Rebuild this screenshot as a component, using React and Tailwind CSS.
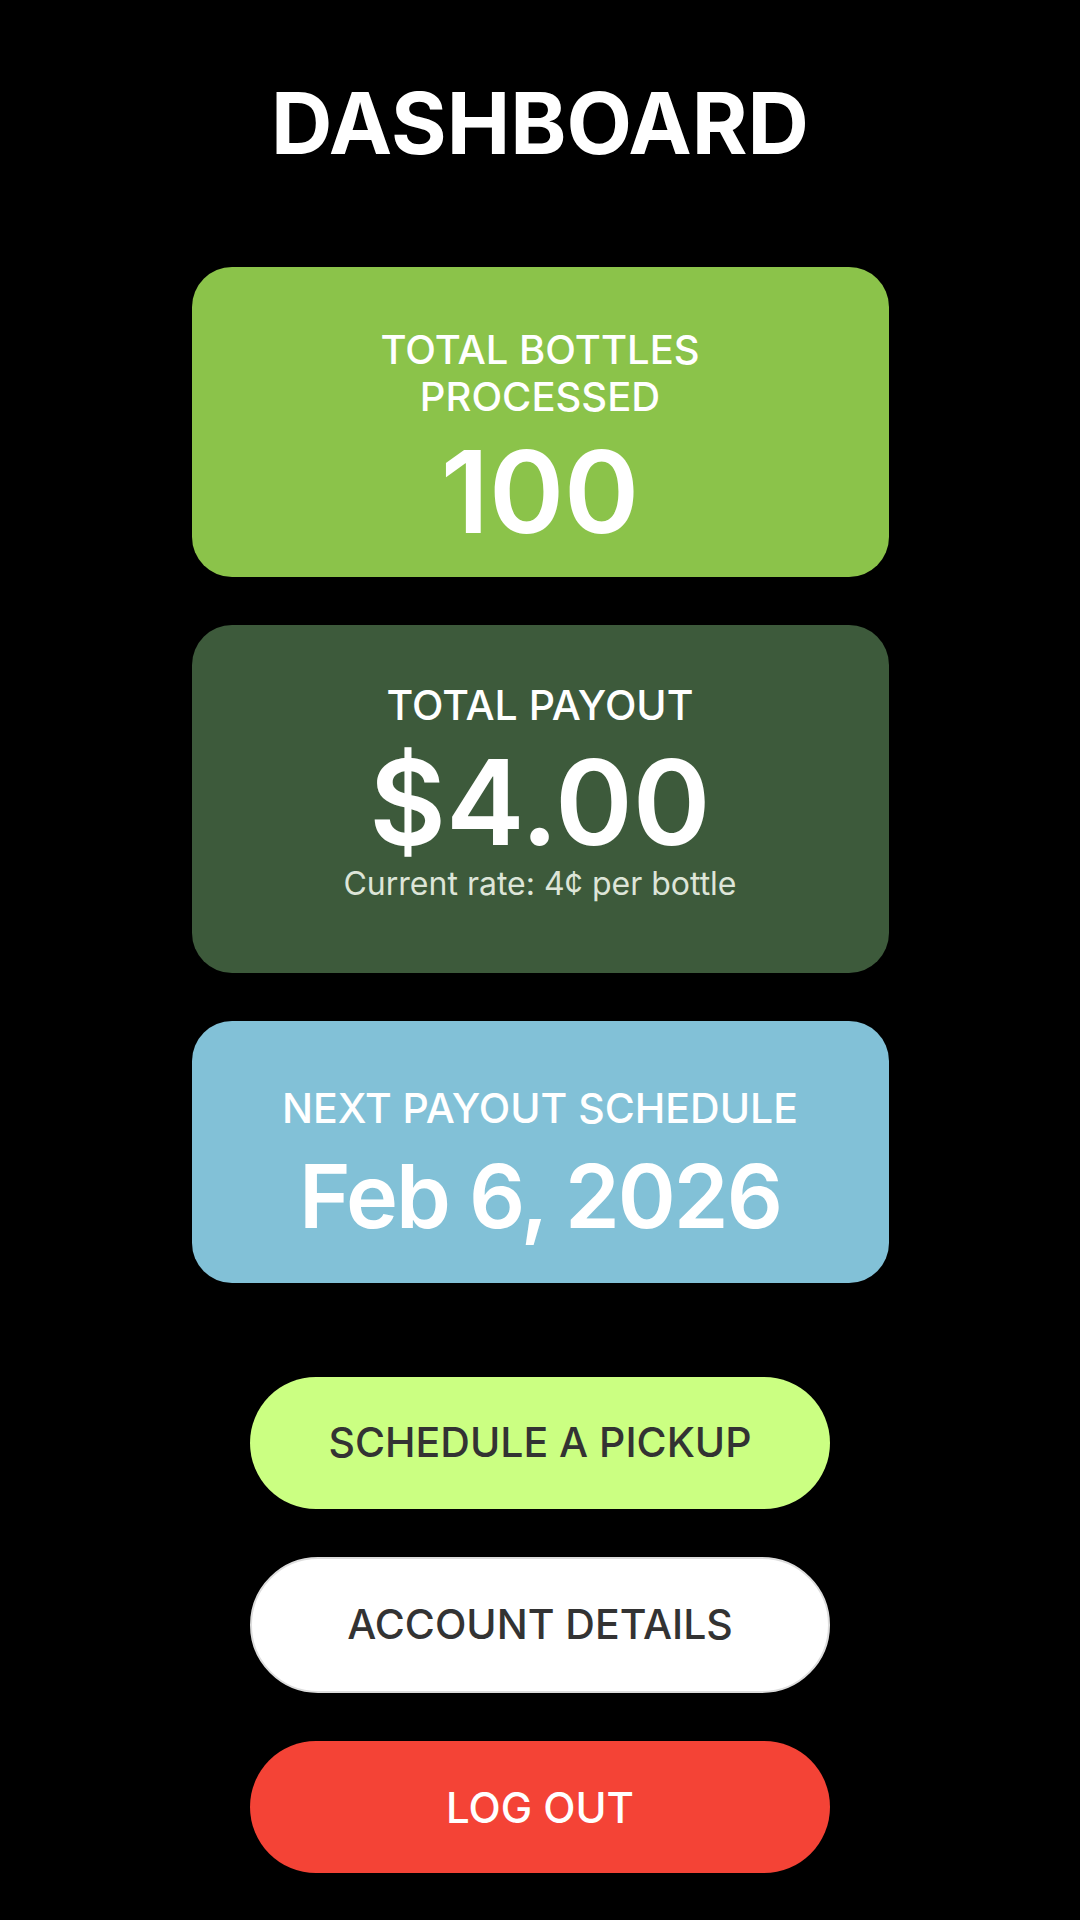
export default function App() {
  const font = { fontFamily: 'Inter, "Noto Sans", sans-serif' };
  return (
    <div className="min-h-[1920px] w-[1080px] bg-black flex flex-col items-center" style={font}>
      <h1 className="mt-[80px] text-[85px] leading-[88px] font-bold text-white">DASHBOARD</h1>

      <div className="mt-[99px] w-[697px] flex flex-col gap-[48px]">
        <div className="h-[310px] rounded-[40px] bg-[#8bc34a] flex flex-col items-center justify-center text-white pt-[30px]">
          <div className="text-[40px] leading-[47px] font-medium text-center">TOTAL BOTTLES<br />PROCESSED</div>
          <div className="text-[114px] leading-[112px] font-semibold mt-[16px]">100</div>
        </div>

        <div className="h-[348px] rounded-[40px] bg-[#3d5a3b] flex flex-col items-center justify-center text-white pb-[14px]">
          <div className="text-[41px] leading-[48px] font-medium mb-[20px]">TOTAL PAYOUT</div>
          <div className="text-[118px] leading-[106px] font-semibold">$4.00</div>
          <div className="text-[32px] leading-[38px] text-[#dde5d8] mt-[10px]">Current rate: 4¢ per bottle</div>
        </div>

        <div className="h-[262px] rounded-[40px] bg-[#82c1d7] flex flex-col items-center justify-center text-white pt-[27px]">
          <div className="text-[41px] leading-[46px] font-medium">NEXT PAYOUT SCHEDULE</div>
          <div className="text-[88px] leading-[100px] font-semibold tracking-[-2px] mt-[15px]">Feb 6, 2026</div>
        </div>
      </div>

      <div className="mt-[94px] w-[580px] flex flex-col gap-[48px]">
        <button className="h-[132px] rounded-full bg-[#cbff82] text-[#333333] text-[41px] font-medium">SCHEDULE A PICKUP</button>
        <button className="h-[136px] rounded-full bg-white border-2 border-[#dddddd] text-[#333333] text-[41px] font-medium">ACCOUNT DETAILS</button>
        <button className="h-[132px] rounded-full bg-[#f44336] text-white text-[42px] font-medium">LOG OUT</button>
      </div>
    </div>
  );
}
